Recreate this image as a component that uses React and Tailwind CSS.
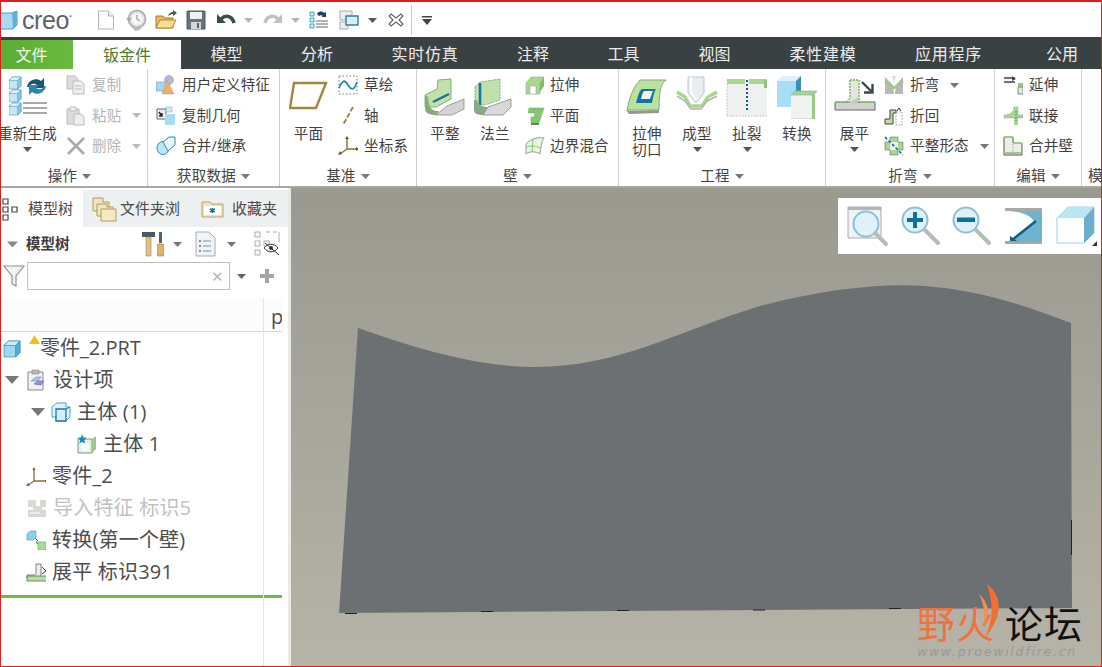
import React from "react";

const S = ({ w = 20, h = 20, children, className = "" }) => (
  <svg width={w} height={h} viewBox={`0 0 ${w} ${h}`} className={`shrink-0 ${className}`}>{children}</svg>
);
const Caret = ({ c = "#666", className = "" }) => (
  <svg width="9" height="5" viewBox="0 0 9 5" className={`shrink-0 ${className}`}><path d="M0 0h9L4.5 5z" fill={c} /></svg>
);
const Cube = ({ x = 0, y = 0, s = 12, f = "#c4e6f5", t = "#e8f6fc", r = "#8cc8e2", st = "#5aa5c8" }) => {
  const d = s * 0.28;
  return (
    <g transform={`translate(${x} ${y})`} stroke={st} strokeWidth="0.7" strokeLinejoin="round">
      <path d={`M0 ${d}L${d} 0H${s}V${s - d}L${s - d} ${s}H0Z`} fill={f} />
      <path d={`M0 ${d}L${d} 0H${s}L${s - d} ${d}Z`} fill={t} />
      <path d={`M${s - d} ${d}L${s} 0V${s - d}L${s - d} ${s}Z`} fill={r} />
    </g>
  );
};

/* quick access */
const Logo = () => <S w={20} h={20}><path d="M1 3h13l5-2v14l-4 4H1z" fill="#a9dcf2" stroke="#4b9cc0" /><path d="M14 3l5-2v14l-4 4z" fill="#5fb2d6" /></S>;
const NewDoc = () => <S w={18} h={20}><path d="M1.500 1h10l5 5v13h-15z" fill="#fdfdfd" stroke="#b5b5b5" /><path d="M11.500 1v5h5" fill="#eee" stroke="#b5b5b5" /></S>;
const Clock = () => <S w={22} h={22}><circle cx="12" cy="10" r="8.500" fill="#e6e6e6" stroke="#b5b5b5" strokeWidth="2" /><circle cx="12" cy="10" r="5.500" fill="#f7f7f7" /><path d="M12 6v4l3 2" stroke="#aaa" fill="none" strokeWidth="1.500" /><path d="M1 9l3 4 3-4z" fill="#aaa" /><path d="M6 16l5 5 5-2" stroke="#bbb" strokeWidth="2" fill="none" /></S>;
const Open = () => <S w={22} h={20}><path d="M1 6h7l2 2h8v10H1z" fill="#e9b95b" stroke="#a67c2b" /><path d="M1 18l4-8h16l-4 8z" fill="#f9dd92" stroke="#b28a35" /><path d="M13 6c1-3 3-4 5-4V0l4 3-4 3V4c-2 0-3 1-5 2z" fill="#3c5560" /></S>;
const Save = () => <S w={20} h={20}><path d="M1 1h18v18H1z" fill="#66757c" stroke="#4f5b60" /><path d="M4 2h12v7H4z" fill="#eef1f2" /><path d="M5 12h10v7H5z" fill="#d4d8da" /><path d="M11 13h2v5h-2z" fill="#56646a" /></S>;
const Undo = ({ c = "#3d4a50", flip }) => <svg width="20" height="16" viewBox="0 0 20 16" className={flip ? "-scale-x-100" : ""}><path d="M5 7c4-4 11-4 13 4" fill="none" stroke={c} strokeWidth="3.500" /><path d="M1 2v9h9z" fill={c} /></svg>;
const Regen2 = () => <S w={20} h={20}><path d="M1 2h4v4H1zM1 8h4v4H1zM1 14h4v4H1z" fill="#cce9f5" stroke="#4aa3c7" /><path d="M8 4c2-3 5-3 7-1l2-1v5h-5l2-1c-1-1-3-1-4 0z" fill="#173f5c" /><path d="M7 11h12M7 14h12M7 17h12" stroke="#999" strokeWidth="1.300" /></S>;
const Windows = () => <S w={20} h={20}><path d="M1 1h12v9H1zM1 12h8v7H1z" fill="#eee" stroke="#aaa" /><path d="M7 6h12v9H7z" fill="#d9eef7" stroke="#2f7ea3" strokeWidth="1.400" /></S>;
const CloseX = () => <S w={16} h={16}><path d="M3 2l5 4 5-4 2 2-4 4 4 4-2 2-5-4-5 4-2-2 4-4-4-4z" fill="#fff" stroke="#666" strokeWidth="1.200" /></S>;
const MenuCaret = () => <svg width="10" height="9" viewBox="0 0 10 9"><path d="M0 0h10v1.500H0z" fill="#444" /><path d="M0 3h10L5 9z" fill="#444" /></svg>;

/* ribbon large */
const IRegen = () => <S w={40} h={44}><Cube x={0} y={2} s={12} /><Cube x={0} y={15} s={12} /><Cube x={0} y={28} s={12} /><path d="M18 12C19 5 27 2 32 6l3-3v10H25l3-3C25 8 22 8 20 12z" fill="#13577a" /><path d="M37 11c-1 7-9 10-14 6l-3 3V10h10l-3 3c3 2 6 2 8-2z" fill="#2b86ad" /><path d="M14 28h24M14 33h24M14 38h24" stroke="#a8a8a8" strokeWidth="2" /></S>;
const IPlane = () => <S w={40} h={44}><path d="M5 8h32L27 33H1z" fill="#fff" stroke="#a8843f" strokeWidth="2.400" /></S>;
const IFlat = () => <S w={42} h={44}><g transform="translate(1 3)"><path d="M0 17l12-6 1-9 13-1v20L11 29H0z" fill="#bfe2ac" stroke="#6d9c63" strokeWidth="0.8" /><path d="M0 17v13c0 5 4 7 11 7l3-4c-7 0-10-2-11-14z" fill="#8aa980" /><path d="M11 37l11-9 17-7v10l-12 6z" fill="#d4d4d4" stroke="#888" strokeWidth="0.8" /><path d="M8 24l16-8" stroke="#1c6f9f" strokeWidth="2.400" /></g></S>;
const IFlange = () => <S w={42} h={44}><g transform="translate(0 3)"><path d="M1 9l5-5 20-3v21l-15 5H1z" fill="#bfe2ac" stroke="#6d9c63" strokeWidth="0.8" strokeDasharray="2 1" /><path d="M6 5v22" stroke="#1875a8" strokeWidth="2.600" /><path d="M0 22v10c0 4 4 5 9 5l5-8c-6 0-10-2-11-7z" fill="#8aa980" /><path d="M9 37l5-8 23-8v8l-8 8z" fill="#d8d8d8" stroke="#888" strokeWidth="0.8" /></g></S>;
const ICut = () => <S w={42} h={44}><path d="M1 36C3 24 6 14 14 5h26c-5 3-7 12-7 30H1z" fill="#b9e29e" stroke="#85a880" /><path d="M10 28c2-7 3-12 6-14h14c-2 3-3 8-4 14z" fill="#13749f" /><path d="M15 24c1-5 2-7 3-8h9c-1 2-2 5-3 8z" fill="#f4f4f4" /><path d="M1 36l32-1v3l-30 1z" fill="#8f9a8c" /></S>;
const IForm = () => <S w={42} h={44}><path d="M12 2h16v16l-8 10-8-10z" fill="#e8edf0" stroke="#c0c6c9" /><path d="M15 2v15l5 8" stroke="#fff" strokeWidth="2" fill="none" /><path d="M1 17l8 5 5 9h12l6-9 9-5" fill="none" stroke="#a9d68e" strokeWidth="3.500" /><path d="M1 21l8 5 6 8h10l6-8 10-5" fill="none" stroke="#aeb3b0" strokeWidth="1.500" /></S>;
const IRip = () => <S w={42} h={44}><path d="M1 6h40v35H1z" fill="#f0f1f1" /><path d="M1 4h18v5H1zM23 4h18v5H23z" fill="#a8d78f" /><path d="M38 5h3v8h-3z" fill="#8fc47a" /><path d="M1 41h40M1 9v32" stroke="#bbb" strokeDasharray="1.500 1.500" /><path d="M21 5v30" stroke="#125f86" strokeWidth="2" strokeDasharray="2 2" /></S>;
const IConv = () => <S w={42} h={44}><path d="M1 6h19v26H1z" fill="#a5def6" /><path d="M1 6l5-5h19l-5 5z" fill="#d9f2fc" /><path d="M20 6l5-5v18l-5 5z" fill="#3a8fb4" /><path d="M15 20h24v24H15z" fill="#f1f3f0" /><path d="M15 20l4-4h22l-3 4z" fill="#a7d68c" stroke="#8a9" strokeWidth="0.6" /><path d="M36 20h3v24h-3z" fill="#9ccc82" /><path d="M15 44h24" stroke="#999" strokeDasharray="1.500 1.500" /></S>;
const IUnbend = () => <S w={42} h={44}><path d="M16 5h9v22H16z" fill="#e4e4e4" /><path d="M1 27h40v8H1z" fill="#d2d2cf" stroke="#444" strokeWidth="0.8" /><path d="M16 5v16c0 4-2 6-6 6H1M25 5v17c0 3 1 5 3 5h13M16 5h9" stroke="#8cc56c" strokeWidth="1.800" strokeDasharray="2 1" fill="none" /><path d="M15 27c6 6 8 3 10-5" fill="#c8c8c8" /><path d="M28 7l10 10m-8 .5h8.500V9" stroke="#3b474d" strokeWidth="2.400" fill="none" /></S>;

/* ribbon small */
const ICopy = () => <S><path d="M1 1h8l3 3v10H1z" fill="#ddd" stroke="#bbb" /><path d="M7 6h8l3 3v10H7z" fill="#eee" stroke="#bbb" /><path d="M9 11h7M9 14h7" stroke="#bbb" /></S>;
const IPaste = () => <S><path d="M1 3h12v15H1z" fill="#ddd" stroke="#bbb" /><path d="M4 1h6v4H4z" fill="#eee" stroke="#bbb" /><path d="M8 8h7l3 3v8H8z" fill="#eee" stroke="#bbb" /></S>;
const IDel = () => <S><path d="M2 2l16 16M18 2L2 18" stroke="#aaa" strokeWidth="2.600" /></S>;
const IUdf = () => <S><path d="M0 7h13v9H0z" fill="#a8d6ee" stroke="#68a" strokeWidth="0.5" /><circle cx="13" cy="5" r="4.500" fill="#b4b8e0" stroke="#889" strokeWidth="0.5" /><path d="M11 5l7 14H6z" fill="#eab36b" stroke="#a97" strokeWidth="0.5" /></S>;
const ICopyGeom = () => <S><path d="M1 3h9v10H1z" fill="#eee" stroke="#666" /><path d="M3 6l3 4m0-3v3H3" stroke="#222" strokeWidth="1.400" fill="none" /><path d="M9 8h10v11H9z" fill="#a8dcf0" /><path d="M10 1h6v5h-6z" fill="#cfeaf6" stroke="#7ab" strokeWidth="0.5" /></S>;
const IMerge = () => <S><ellipse cx="7" cy="12" rx="6" ry="6.500" fill="#bfe6f5" stroke="#2a8cb5" /><path d="M7 6l6-5h6v8l-7 6z" fill="#e9f5fa" stroke="#2a8cb5" /></S>;
const ISketch = () => <S><path d="M1 1h18v18H1z" fill="none" stroke="#777" strokeDasharray="1.500 2" /><path d="M1 13c4-9 6-8 9-3s6 6 9-3" fill="none" stroke="#2a8cb5" strokeWidth="1.800" /></S>;
const IAxis = () => <S><path d="M15 1L5 19" stroke="#a8843f" strokeWidth="2" strokeDasharray="5 2" /></S>;
const ICsys = () => <S><path d="M9 2v11l-7 5M9 13h9" stroke="#8a6d33" strokeWidth="1.400" fill="none" /><path d="M9 0l2 3H7zM18 11v4l3-2zM0 19l4-1-2-3z" fill="#6b5526" /></S>;
const IExtrude = () => <S><path d="M1 8l5-6h13l-4 6v11H1z" fill="#a9d88d" stroke="#7a9" strokeWidth="0.5" /><path d="M5 11h6v8H5z" fill="#fff" stroke="#999" strokeWidth="0.5" /><path d="M15 8l4-6v9l-4 6z" fill="#7fbd62" /></S>;
const IFlatS = () => <S><path d="M4 2h15l-5 15H6v-6h3l1-4H3z" fill="#8cc46e" stroke="#4b7" strokeWidth="0.5" /><path d="M6 17h8v2H6z" fill="#777" /></S>;
const IBlend = () => <S><path d="M1 8C6 2 14 1 19 2c-3 4-3 10-4 16-5-3-10-3-14 0z" fill="#e9f3e2" stroke="#999" /><path d="M8 3l-1 13M2 11c5-2 9-1 13 1" stroke="#8cc46e" fill="none" /></S>;
const IBendS = () => <S><path d="M1 2l8 8 1 9H1z M19 2l-7 8-1 9h8z" fill="#b9b9b9" /><path d="M1 6l9 7 9-7" fill="none" stroke="#9bcc7c" strokeWidth="2.500" /><path d="M8 1h4l-2 7z" fill="#ddd" /></S>;
const IBack = () => <S><path d="M1 18v-5h5V4h6v3H9v11z" fill="#b9e0a0" stroke="#444" /><path d="M12 6h6v13h-6z" fill="none" stroke="#999" strokeDasharray="1.500 1.500" /><path d="M13 5l2-3 2 3" stroke="#333" fill="none" /></S>;
const IFlatState = () => <S><path d="M6 1h8v5h5v8h-5v5H6v-5H1V6h5z" fill="#a9d88d" stroke="#557" strokeWidth="0.5" /><path d="M6 6h8v8H6z" fill="#eee" /><path d="M1 1l18 18" stroke="#1c7aa8" strokeWidth="1.800" strokeDasharray="3 2" /></S>;
const IExtend = () => <S><path d="M1 3h11M1 7h11" stroke="#444" strokeWidth="1.500" /><path d="M9 1l4 3-4 2" fill="#444" /><path d="M15 8h5v4h-5z" fill="#9bcc7c" /><path d="M15 12h5v7h-5z" fill="#e5e5e5" stroke="#888" /></S>;
const IJoin = () => <S><path d="M11 1h4v18h-4z" fill="#a9d88d" /><path d="M1 9c5 0 10-2 10-8h4v8h5v3H1z" fill="#a9d88d" stroke="#8a9" strokeWidth="0.5" /><path d="M13 5v10" stroke="#27a" strokeDasharray="1.500 1.500" /></S>;
const IMergeW = () => <S><path d="M1 1h9v6h9v12H1z" fill="#ededed" stroke="#555" /><path d="M1 1h9M10 7h9M1 17h18" stroke="#9bcc7c" strokeWidth="2" /><path d="M10 8v10" stroke="#999" strokeDasharray="1.500 1.500" /></S>;

/* tree */
const IGraph = () => <S w={20} h={24}><g fill="#fff" stroke="#444" strokeWidth="1.200"><path d="M2 2h5v5H2zM2 10h5v5H2zM11 10h5v5h-5zM2 18h5v5H2z" /></g></S>;
const IFolders = () => <S w={26} h={26}><path d="M1 2h10v4h6v9H1z" fill="#efe5c4" stroke="#b49a5b" /><path d="M5 8h10v3h6v9H5z" fill="#efe5c4" stroke="#b49a5b" /><path d="M9 13h15v12H9z" fill="#f4e9c3" stroke="#b49a5b" /></S>;
const IStarFolder = () => <S w={24} h={20}><path d="M1 3h8l2 2h11v13H1z" fill="#f1e3b6" stroke="#bba268" /><path d="M3 7h17v9H3z" fill="#fff" /><path d="M11.500 9v5M9 10l5 3M14 10l-5 3" stroke="#1a6ea5" strokeWidth="1.500" /></S>;
const ITools = () => <S w={24} h={26}><path d="M1 1h13v5H1z" fill="#4c5a60" /><path d="M5 6h5v19H5z" fill="#e3c084" stroke="#a08250" strokeWidth="0.6" /><path d="M18 1h3v11h-3z" fill="#53636b" /><path d="M16.500 13h6v12h-6z" fill="#deb26c" stroke="#a08250" strokeWidth="0.6" /></S>;
const IList = () => <S w={22} h={26}><path d="M1 1h13l6 6v18H1z" fill="#eef4f7" stroke="#aab" /><path d="M4 9h2v2H4zM4 14h2v2H4zM4 19h2v2H4z" fill="#7d919b" /><path d="M8 10h8M8 15h8M8 20h8" stroke="#7d919b" /></S>;
const IHidden = () => <S w={28} h={26}><g fill="none" stroke="#aaa"><path d="M2 1h5v5H2zM2 10h5v5H2zM2 19h5v5H2zM11 10h5v5h-5zM13 1h4M20 1h4M26 1v10" /></g><path d="M11 17c4-5 10-5 14 0-4 5-10 5-14 0z" fill="#fff" stroke="#333" /><circle cx="18" cy="17" r="2" fill="#333" /><path d="M12 12l14 12" stroke="#333" /></S>;
const IFunnel = () => <S w={22} h={24}><path d="M1 2h20l-8 10v10l-4-2v-8z" fill="#f1f3f3" stroke="#8d9498" strokeWidth="1.200" /></S>;
const IPart = () => <S w={20} h={20}><Cube x={1} y={3} s={16} f="#9ed7f0" t="#c8ecfa" r="#54acd2" st="#3a8fb5" /></S>;
const IDesign = () => <S w={20} h={22}><path d="M2 3h15v18H2z" fill="#f1f1f1" stroke="#888" /><path d="M6 1h7v4H6z" fill="#bbb" stroke="#777" strokeWidth="0.5" /><path d="M5 12l5-4h5l-3 4z" fill="#9ccfe9" stroke="#47a" strokeWidth="0.5" /><path d="M8 15l4-3h6l-3 4z" fill="#a08ed8" stroke="#64a" strokeWidth="0.5" /></S>;
const IBody = () => <S w={20} h={20}><path d="M1 5l5-4h9v4h4v10l-4 4H5v-4H1z" fill="#e4f3fa" stroke="#4aa3c7" /><path d="M5 7h10v12H5z" fill="#d4edf8" stroke="#1a7aa5" strokeWidth="1.300" /><path d="M15 7l4-2" stroke="#1a7aa5" /></S>;
const IBody1 = () => <S w={20} h={20}><path d="M1 5h14v14H1z" fill="#e8efe4" stroke="#7c9c6e" /><path d="M15 5l4-3v13l-4 4z" fill="#a3c690" /><path d="M4 9h8v8H4z" fill="#fbfbfb" /><path d="M5 0l1.500 3.500 3.500.3-2.700 2.300.9 3.500L5 7.700l-2.700 1.900.9-3.500L.5 3.800 4 3.500z" fill="#158cc9" /></S>;
const ITreeCsys = () => <S><path d="M8 3v12l-6 4M8 15h11" stroke="#8a6d33" strokeWidth="1.300" fill="none" /><path d="M8 1l1.500 3h-3zM19 13.500v3l2-1.500zM0 20l4-.5-2-2.500z" fill="#6b5526" /></S>;
const IImport = () => <S><path d="M1 2h8v6h4V2h6v7h-4v3h4v7H1v-7h5V9H1z" fill="#d8d8d4" /><path d="M3 15h10" stroke="#fff" /></S>;
const IConvT = () => <S><path d="M1 4l3-3h6v6l-3 3H1z" fill="#8ed0ee" stroke="#4a9cc0" strokeWidth="0.6" /><path d="M12 12h8v8h-8z" fill="#a9dd8d" stroke="#6a9" strokeWidth="0.6" /><path d="M9 8l3 3" stroke="#555" /><path d="M12 14l-2-1 1-2z" fill="#555" /></S>;
const IFlatT = () => <S><path d="M10 2h5v9c0 4-2 5-5 5H1v-3h7c2 0 2-1 2-3z" fill="#ecefe8" stroke="#666" strokeWidth="0.8" /><path d="M1 14h20v5H1z" fill="#b8e098" stroke="#666" strokeWidth="0.8" /><path d="M16 5l4 4-4 3" stroke="#444" fill="none" /></S>;

const Small = ({ icon, children, gray, caret, gap = "gap-[6px]" }) => (
  <div className={`flex h-[30.5px] items-center ${gap} ${gray ? "text-[#b4b4b4]" : "text-[#3f3f3f]"}`}>
    {icon}
    <span className="whitespace-nowrap">{children}</span>
    {caret && <Caret c={gray ? "#bbb" : "#777"} className="ml-[5px]" />}
  </div>
);
const Large = ({ icon, label, label2, caret, w = "w-[50px]" }) => (
  <div className={`flex ${w} shrink-0 flex-col items-center pt-[6px]`}>
    <div className="flex h-[44px] items-start justify-center">{icon}</div>
    <div className="mt-[7px] whitespace-nowrap leading-[15px]">{label}</div>
    {label2 && <div className="mt-px whitespace-nowrap leading-[15px]">{label2}</div>}
    {caret && <Caret c="#555" className="mt-[6px]" />}
  </div>
);
const Group = ({ w, label, children, shift = "" }) => (
  <div className={`${w} flex shrink-0 flex-col border-r border-[#cfcfcf]`}>
    <div className="flex h-[97px] overflow-hidden">{children}</div>
    <div className={`flex h-[20px] items-center justify-center gap-[5px] whitespace-nowrap text-[#444] ${shift}`}>
      <span>{label}</span>
      <Caret c="#777" />
    </div>
  </div>
);
const Col = ({ children, className = "" }) => <div className={`flex flex-col pt-px ${className}`}>{children}</div>;

const Tab = ({ label, w }) => <div className={`${w} flex h-full shrink-0 items-center justify-center whitespace-nowrap`}>{label}</div>;
const Row = ({ indent, arrow, icon, children, gray, gap = "gap-[7px]" }) => (
  <div className={`flex h-[32px] items-center ${indent} ${gap} whitespace-nowrap tracking-[0.2px] ${gray ? "text-[#c2c2c2]" : "text-[#4d4d4d]"}`}>
    {arrow && <Caret c="#777" className="h-[8px] w-[14px]" />}
    {icon}
    <span>{children}</span>
  </div>
);

export default function App() {
  return (
    <div className="relative flex h-[667px] w-[1102px] flex-col overflow-hidden bg-white font-['Open_Sans','Noto_Sans_CJK_SC',sans-serif]">
      {/* quick access bar */}
      <div className="flex h-[37px] shrink-0 items-center pt-[3px]">
        <div className="ml-[-2px] flex w-[99px] shrink-0 items-center gap-[4px]">
          <Logo />
          <span className="font-['Liberation_Sans',sans-serif] text-[25px] leading-none tracking-[-0.4px] text-[#5d6266]">creo</span>
          <span className="mt-[-8px] ml-[-4px] text-[8px] leading-none text-[#666]">•</span>
        </div>
        <NewDoc />
        <div className="ml-[10px]"><Clock /></div>
        <div className="ml-[8px]"><Open /></div>
        <div className="ml-[9px]"><Save /></div>
        <div className="ml-[10px]"><Undo /></div>
        <Caret c="#b5b5b5" className="ml-[8px]" />
        <div className="ml-[10px]"><Undo c="#bcc2c5" flip /></div>
        <Caret c="#b5b5b5" className="ml-[8px]" />
        <div className="ml-[9px]"><Regen2 /></div>
        <div className="ml-[10px]"><Windows /></div>
        <Caret c="#555" className="ml-[9px]" />
        <div className="ml-[11px]"><CloseX /></div>
        <div className="ml-[7px] h-[30px] w-px bg-[#ccc]" />
        <div className="ml-[10px]"><MenuCaret /></div>
      </div>

      {/* menu tabs */}
      <div className="flex h-[32px] shrink-0 items-end overflow-hidden bg-[#3a4143] text-[16px] text-[#ededed]">
        <div className="flex h-[29px] w-[73px] shrink-0 items-center justify-center bg-linear-to-r from-[#5bac35] to-[#6cb93f] pr-[10px] text-[#f2f7ec]">文件</div>
        <div className="flex h-[29px] w-[108px] shrink-0 items-center justify-center bg-white text-[#4f7a2e]">钣金件</div>
        <div className="flex h-[32px] items-center pt-px">
          <Tab label="模型" w="w-[91px]" />
          <Tab label="分析" w="w-[90px]" />
          <Tab label={<span className="tracking-[0.8px]">实时仿真</span>} w="w-[126px]" />
          <Tab label="注释" w="w-[90px]" />
          <Tab label="工具" w="w-[91px]" />
          <Tab label="视图" w="w-[91px]" />
          <Tab label={<span className="tracking-[0.8px]">柔性建模</span>} w="w-[126px]" />
          <Tab label={<span className="tracking-[0.8px]">应用程序</span>} w="w-[125px]" />
          <Tab label="公用" w="w-[102px]" />
        </div>
      </div>

      {/* ribbon */}
      <div className="flex h-[119px] shrink-0 border-b-2 border-[#a9a89e] text-[14.5px] leading-none tracking-[0.2px] text-[#3f3f3f]">
        <Group w="w-[148px]" label="操作" shift="pr-[8px]">
          <Large icon={<div className="ml-[2px]"><IRegen /></div>} label="重新生成" caret w="w-[55px]" />
          <Col className="ml-[11px]">
            <Small gray icon={<ICopy />}>复制</Small>
            <Small gray caret icon={<IPaste />}>粘贴</Small>
            <Small gray caret icon={<IDel />}>删除</Small>
          </Col>
        </Group>
        <Group w="w-[132px]" label="获取数据">
          <Col className="ml-[8px]">
            <Small icon={<IUdf />}>用户定义特征</Small>
            <Small icon={<ICopyGeom />}>复制几何</Small>
            <Small icon={<IMerge />}>合并/继承</Small>
          </Col>
        </Group>
        <Group w="w-[137px]" label="基准">
          <Large icon={<IPlane />} label="平面" w="w-[57px]" />
          <Col className="ml-[1px]">
            <Small icon={<ISketch />}>草绘</Small>
            <Small icon={<IAxis />}>轴</Small>
            <Small icon={<ICsys />}>坐标系</Small>
          </Col>
        </Group>
        <Group w="w-[202px]" label="壁">
          <div className="w-[3px] shrink-0" />
          <Large icon={<IFlat />} label="平整" />
          <Large icon={<IFlange />} label="法兰" />
          <Col className="ml-[5px]">
            <Small gap="gap-[5px]" icon={<IExtrude />}>拉伸</Small>
            <Small gap="gap-[5px]" icon={<IFlatS />}>平面</Small>
            <Small gap="gap-[5px]" icon={<IBlend />}>边界混合</Small>
          </Col>
        </Group>
        <Group w="w-[207px]" label="工程">
          <div className="w-[3px] shrink-0" />
          <Large icon={<ICut />} label="拉伸" label2="切口" />
          <Large icon={<IForm />} label="成型" caret />
          <Large icon={<IRip />} label="扯裂" caret />
          <Large icon={<IConv />} label="转换" />
        </Group>
        <Group w="w-[169px]" label="折弯">
          <Large icon={<IUnbend />} label="展平" caret w="w-[57px]" />
          <Col className="ml-px">
            <Small caret icon={<IBendS />}>折弯</Small>
            <Small icon={<IBack />}>折回</Small>
            <Small caret icon={<IFlatState />}>平整形态</Small>
          </Col>
        </Group>
        <Group w="w-[87px]" label="编辑">
          <Col className="ml-[8px]">
            <Small icon={<IExtend />}>延伸</Small>
            <Small icon={<IJoin />}>联接</Small>
            <Small icon={<IMergeW />}>合并壁</Small>
          </Col>
        </Group>
        <div className="flex min-w-0 flex-1 flex-col overflow-hidden">
          <div className="h-[97px]" />
          <div className="flex h-[20px] items-center pl-[6px] whitespace-nowrap text-[#444]">模</div>
        </div>
      </div>

      {/* body */}
      <div className="flex min-h-0 flex-1">
        {/* model tree panel */}
        <div className="flex w-[291px] shrink-0 flex-col border-r-[3px] border-[#e9e9e6] bg-white">
          <div className="mt-[2px] flex h-[37px] shrink-0 items-center bg-[#ecf0f0] text-[15px] text-[#4a4a4a]">
            <div className="flex h-full w-[83px] items-center gap-[7px] bg-white pl-[1px]"><IGraph /><span>模型树</span></div>
            <div className="flex items-center gap-[2px] pl-[9px]"><IFolders /><span className="w-[60px] overflow-hidden whitespace-nowrap">文件夹浏</span></div>
            <div className="flex items-center gap-[7px] pl-[21px]"><IStarFolder /><span>收藏夹</span></div>
          </div>
          <div className="flex h-[34px] shrink-0 items-center">
            <Caret c="#888" className="ml-[7px] h-[7px] w-[11px]" />
            <span className="ml-[8px] text-[14.5px] font-bold text-[#3c3c3c]">模型树</span>
            <div className="ml-[71px]"><ITools /></div>
            <Caret c="#777" className="ml-[8px]" />
            <div className="ml-[13px]"><IList /></div>
            <Caret c="#777" className="ml-[10px]" />
            <div className="ml-[17px]"><IHidden /></div>
          </div>
          <div className="flex h-[30px] shrink-0 items-center">
            <div className="ml-[3px]"><IFunnel /></div>
            <div className="ml-[2px] flex h-[28px] w-[203px] items-center justify-end border border-[#bfbfbf] pr-[5px] text-[15px] leading-none text-[#b5b5b5]">✕</div>
            <Caret c="#666" className="ml-[7px]" />
            <svg width="14" height="14" viewBox="0 0 14 14" className="ml-[14px]"><path d="M5 0h4v5h5v4H9v5H5V9H0V5h5z" fill="#a5a5a5" /></svg>
          </div>
          <div className="mt-[7px] flex min-h-0 w-[282px] flex-1">
            <div className="flex w-[264px] shrink-0 flex-col border-r border-[#e6e6e6] text-[20px]">
              <div className="h-[34px] shrink-0 border-b border-[#d9d9d9] bg-[#fcfcfc]" />
              <div className="relative flex h-[32px] items-center whitespace-nowrap pl-[3px] text-[#4d4d4d]">
                <IPart />
                <svg width="11" height="9" viewBox="0 0 11 9" className="absolute left-[29px] top-[3px]"><path d="M5.500 0L11 9H0z" fill="#eebf1f" /></svg>
                <span className="ml-[17px]">零件_2.PRT</span>
              </div>
              <Row indent="pl-[5px]" arrow icon={<IDesign />}>设计项</Row>
              <Row indent="pl-[31px]" arrow gap="gap-[6px]" icon={<IBody />}>主体 (1)</Row>
              <Row indent="pl-[77px]" icon={<IBody1 />} gap="gap-[6px]">主体 1</Row>
              <Row indent="pl-[26px]" icon={<ITreeCsys />} gap="gap-[6px]">零件_2</Row>
              <Row indent="pl-[27px]" gray icon={<IImport />} gap="gap-[6px]">导入特征 标识5</Row>
              <Row indent="pl-[26px]" icon={<IConvT />} gap="gap-[6px]">转换(第一个壁)</Row>
              <Row indent="pl-[26px]" icon={<IFlatT />} gap="gap-[6px]">展平 标识391</Row>
              <div className="mt-[7px] h-[3px] shrink-0 bg-[#6cbd45]" />
            </div>
            <div className="flex min-w-0 flex-1 flex-col">
              <div className="h-[34px] shrink-0 overflow-hidden border-b border-[#d9d9d9] bg-[#fcfcfc] pl-[7px] text-[20px] leading-[38px] text-[#4d4d4d]">p</div>
              <div className="mt-[263px] h-[3px] shrink-0 bg-[#6cbd45]" />
            </div>
          </div>
        </div>

        {/* graphics area */}
        <div className="relative min-w-0 flex-1 bg-linear-to-b from-[#9a9990] to-[#b6b4a8]">
          <svg width="811" height="479" viewBox="291 188 811 479" className="absolute left-0 top-0">
            <path d="M358 328C420 350 480 367 535 367C620 367 680 330 760 306C820 290 880 283 925 286C975 290 1020 303 1071 323L1072 608L339 613Z" fill="#6d7073" />
            <path d="M345 613.500h12M481 611.500h12M617 610.500h12M753 610h12M889 608.500h12" stroke="#222" strokeWidth="1" />
            <path d="M1071.500 520v35" stroke="#222" strokeWidth="1" />
          </svg>
          {/* view toolbar */}
          <div className="absolute left-[547px] top-[10px] flex h-[56px] w-[264px] items-center bg-white pl-[9px]">
            <svg width="42" height="42" viewBox="0 0 42 42"><path d="M1 2h33v31H1z" fill="#eef3f5" stroke="#aaa" /><path d="M1 2h33v3H1z" fill="#b5b5b5" /><circle cx="19" cy="19" r="12.500" fill="#dff2fa" stroke="#8ebfd6" strokeWidth="2" /><path d="M28 28l11 11" stroke="#b5bdb8" strokeWidth="4" strokeLinecap="round" /></svg>
            <svg width="42" height="42" viewBox="0 0 42 42" className="ml-[10px]"><circle cx="16" cy="15" r="12.500" fill="#dff2fa" stroke="#8ebfd6" strokeWidth="2" /><path d="M8 13h6V7h4v6h6v4h-6v6h-4v-6H8z" fill="#0f6f9f" /><path d="M26 25l13 13" stroke="#b5bdb8" strokeWidth="4" strokeLinecap="round" /></svg>
            <svg width="42" height="42" viewBox="0 0 42 42" className="ml-[9px]"><circle cx="16" cy="15" r="12.500" fill="#dff2fa" stroke="#8ebfd6" strokeWidth="2" /><path d="M7 12.500h18v4.500H7z" fill="#0f6f9f" /><path d="M26 25l13 13" stroke="#b5bdb8" strokeWidth="4" strokeLinecap="round" /></svg>
            <svg width="40" height="38" viewBox="0 0 40 38" className="ml-[12px]"><path d="M1 1h37v36H1z" fill="#6fb4cf" /><path d="M1 1h37v3H1zM1 35h37v2H1z" fill="#a8a8a8" /><path d="M1 4c13 0 24 3 30 11L7 34H1z" fill="#fff" /><path d="M8 33L32 14" stroke="#0f5f86" strokeWidth="2.500" /><path d="M6 29l7 5H6z" fill="#0f5f86" /></svg>
            <svg width="42" height="42" viewBox="0 0 42 42" className="ml-[12px]"><path d="M1 13L12 2h26v26L28 38H1z" fill="#fff" stroke="#9fcee2" /><path d="M1 13L12 2h26L28 13z" fill="#b9e5f5" /><path d="M28 13L38 2v26L28 38z" fill="#6eaecb" /><path d="M41 36l-5 5h5z" fill="#333" /></svg>
          </div>
          {/* watermark */}
          <div className="absolute right-[19px] top-[417px] flex flex-col items-end">
            <div className="relative flex h-[36px] items-center text-[38px] leading-[36px]">
              <span className="tracking-[1px] text-[#f0733e]">野火</span>
              <span className="ml-[10px] tracking-[1px] text-[#111]">论坛</span>
              <svg width="26" height="55" viewBox="0 0 26 55" className="absolute left-[62px] top-[-21px]"><path d="M8 0C24 12 24 32 6 54C15 34 14 18 8 0z" fill="#f36f30" /><path d="M0 10C9 18 12 28 5 42C6 28 5 20 0 10z" fill="#f59045" /></svg>
            </div>
            <div className="mt-[3px] mr-[6px] font-['DejaVu_Sans',sans-serif] text-[12.5px] leading-[15px] italic tracking-[1.75px] text-[#9a9a93]">www.proewildfire.cn</div>
          </div>
        </div>
      </div>

      {/* screenshot frame */}
      <div className="pointer-events-none absolute inset-0 border border-t-2 border-[#d8201f]" />
    </div>
  );
}
